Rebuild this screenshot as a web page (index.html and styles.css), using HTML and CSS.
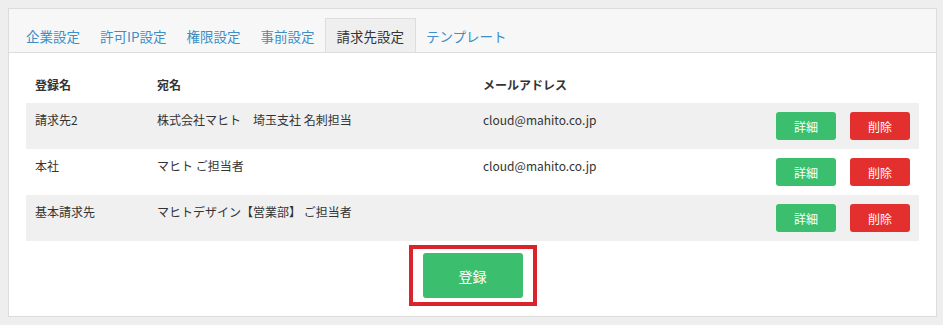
FILE: index.html
```html
<!DOCTYPE html>
<html lang="ja">
<head>
  <meta charset="UTF-8">
  <meta name="viewport" content="width=device-width, initial-scale=1.0">
  <title>請求先設定</title>
  <link rel="stylesheet" href="styles.css">
</head>
<body>
  <div class="card">
    <ul class="tabs">
      <li><a href="#">企業設定</a></li>
      <li><a href="#">許可IP設定</a></li>
      <li><a href="#">権限設定</a></li>
      <li><a href="#">事前設定</a></li>
      <li class="active"><a href="#">請求先設定</a></li>
      <li><a href="#">テンプレート</a></li>
    </ul>

    <div class="content">
      <table class="list">
        <thead>
          <tr><th class="c-name">登録名</th><th class="c-to">宛名</th><th class="c-mail">メールアドレス</th><th></th></tr>
        </thead>
        <tbody>
          <tr>
            <td>請求先2</td><td>株式会社マヒト　埼玉支社 名刺担当</td><td>cloud@mahito.co.jp</td>
            <td class="ops"><button class="btn green">詳細</button><button class="btn red">削除</button></td>
          </tr>
          <tr>
            <td>本社</td><td>マヒト ご担当者</td><td>cloud@mahito.co.jp</td>
            <td class="ops"><button class="btn green">詳細</button><button class="btn red">削除</button></td>
          </tr>
          <tr>
            <td>基本請求先</td><td>マヒトデザイン【営業部】 ご担当者</td><td></td>
            <td class="ops"><button class="btn green">詳細</button><button class="btn red">削除</button></td>
          </tr>
        </tbody>
      </table>

      <div class="actions">
        <div class="highlight"><button class="btn green big">登録</button></div>
      </div>
    </div>
  </div>
</body>
</html>
```

FILE: styles.css
```css
body { margin: 8px 6px 8px 8px; background: #eeeeee; font-family: "Noto Sans CJK JP", "Noto Sans", sans-serif; color: #333; }
.card { width: 927px; height: 307px; background: white; border: 1px solid #dcdcdc; box-shadow: 1px 1px 2px rgba(0,0,0,0.12); }
.tabs { list-style: none; margin: 0; padding: 9px 0 0 7px; background: #f7f7f7; border-bottom: 1px solid #dddddd; display: flex; height: 34px; }
.tabs a { display: block; height: 34px; line-height: 34px; padding: 0 9px; font-size: 13.5px; color: #3d8ec6; text-decoration: none; border: 1px solid transparent; border-bottom: none; box-sizing: border-box; }
.tabs .active a { background: #efefef; color: #333; border-color: #dddddd; padding: 0 11px; }
.content { padding: 12px 17px 0 17px; }
.list { width: 100%; border-collapse: collapse; font-size: 12px; }
.list th { text-align: left; font-weight: bold; height: 38px; padding: 0 9px; vertical-align: middle; }
.list th.c-name { width: 104px; }
.list th.c-to { width: 308px; }
.list td { vertical-align: top; padding: 8px 9px 0 9px; height: 38px; line-height: 18px; }
.list tbody tr:nth-child(odd) { background: #f0f0f0; }
.list td.ops { text-align: right; padding-top: 9px; height: 37px; }
.btn { border: none; border-radius: 3px; color: white; font-family: inherit; font-size: 12px; width: 60px; height: 28px; cursor: pointer; }
.btn + .btn { margin-left: 14px; }
.green { background: #3bbf6f; }
.red { background: #e3302f; }
.actions { display: flex; justify-content: center; margin-top: 4px; }
.highlight { border: 4px solid #d9242d; padding: 4px 10px; }
.btn.big { width: 100px; height: 45px; font-size: 14px; display: block; }
```
